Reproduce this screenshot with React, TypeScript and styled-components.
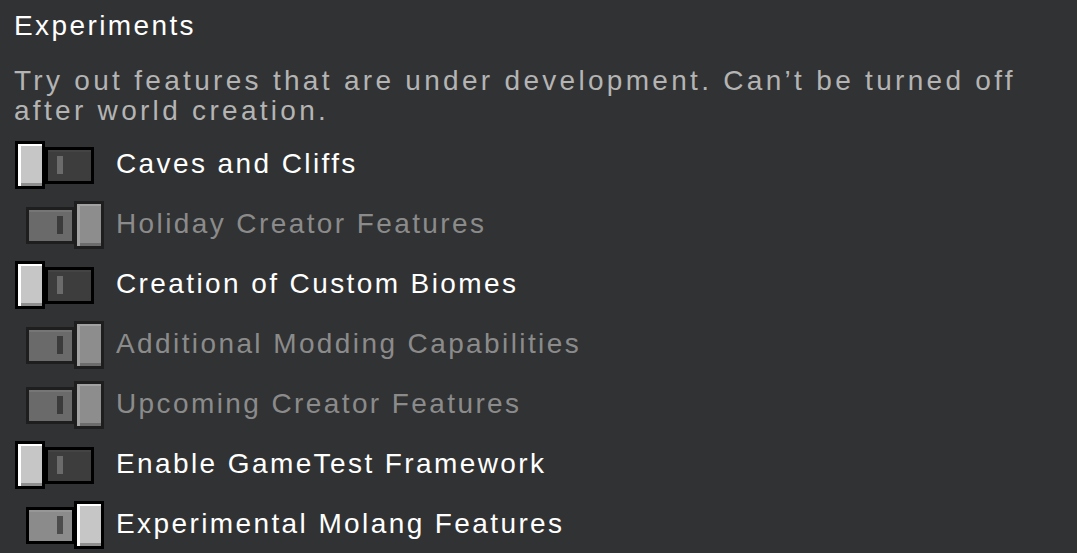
import React from "react";
import styled, { createGlobalStyle, css } from "styled-components";

const GlobalStyle = createGlobalStyle`
  html, body {
    margin: 0;
    padding: 0;
    background: #313233;
    overflow: hidden;
  }
`;

interface Experiment {
  label: string;
  on: boolean;
  disabled?: boolean;
}

const experiments: Experiment[] = [
  { label: "Caves and Cliffs", on: false },
  { label: "Holiday Creator Features", on: true, disabled: true },
  { label: "Creation of Custom Biomes", on: false },
  { label: "Additional Modding Capabilities", on: true, disabled: true },
  { label: "Upcoming Creator Features", on: true, disabled: true },
  { label: "Enable GameTest Framework", on: false },
  { label: "Experimental Molang Features", on: true },
];

const Toggle = ({ on, disabled }: { on: boolean; disabled?: boolean }) => (
  <ToggleBox $on={on}>
    <Track $on={on} $disabled={disabled}>
      <Marker $on={on} $disabled={disabled} />
    </Track>
    <Knob $disabled={disabled} />
  </ToggleBox>
);

const App = () => {
  return (
    <>
      <GlobalStyle />
      <Page>
        <Title>Experiments</Title>
        <Description>
          Try out features that are under development. Can’t be turned off after world creation.
        </Description>
        <List>
          {experiments.map((e) => (
            <Row key={e.label}>
              <Toggle on={e.on} disabled={e.disabled} />
              <Label $disabled={e.disabled}>{e.label}</Label>
            </Row>
          ))}
        </List>
      </Page>
    </>
  );
};

const textBase = css`
  font-family: "Liberation Sans", Arial, sans-serif;
  font-size: 28px;
  line-height: 30px;
  letter-spacing: 2.4px;
`;

const Page = styled("div")`
  width: 1077px;
  height: 553px;
  box-sizing: border-box;
  padding: 11px 0 0 14px;
  display: flex;
  flex-direction: column;
  overflow: hidden;
`;

const Title = styled("div")`
  ${textBase};
  color: #ffffff;
`;

const Description = styled("div")`
  ${textBase};
  letter-spacing: 3.3px;
  color: #b4b4b4;
  margin-top: 25px;
  width: 1040px;
`;

const List = styled("div")`
  display: flex;
  flex-direction: column;
  margin-top: 9px;
`;

const Row = styled("div")`
  display: flex;
  align-items: center;
  height: 60px;
`;

const Label = styled("div")<{ $disabled?: boolean }>`
  ${textBase};
  color: ${(p) => (p.$disabled ? "#8b8b8b" : "#ffffff")};
  margin-left: 12px;
  padding-bottom: 3px;
  white-space: nowrap;
`;

const ToggleBox = styled("div")<{ $on: boolean }>`
  width: 89px;
  margin-left: 1px;
  height: 48px;
  display: flex;
  align-items: center;
  flex-direction: ${(p) => (p.$on ? "row" : "row-reverse")};
  justify-content: flex-end;
`;

const Track = styled("div")<{ $on: boolean; $disabled?: boolean }>`
  box-sizing: border-box;
  width: 49px;
  height: 37px;
  border: 3px solid ${(p) => (p.$disabled ? "#1e1e1f" : "#000000")};
  background: ${(p) => (p.$disabled ? "#6a6a6a" : p.$on ? "#8b8b8b" : "#3d3d3e")};
  box-shadow: inset 0 2px 0 ${(p) => (p.$disabled ? "#767676" : p.$on ? "#979797" : "#444445")};
  display: flex;
  align-items: center;
  justify-content: ${(p) => (p.$on ? "flex-end" : "flex-start")};
  padding: 0 9px;
  margin: ${(p) => (p.$on ? "0 -1px 0 0" : "0")};
`;

const Marker = styled("div")<{ $on: boolean; $disabled?: boolean }>`
  width: 6px;
  height: 18px;
  background: ${(p) => (p.$disabled ? "#3b3b3b" : p.$on ? "#4c4c4c" : "#6b6b6b")};
`;

const Knob = styled("div")<{ $disabled?: boolean }>`
  box-sizing: border-box;
  width: 30px;
  height: 48px;
  border: 3px solid ${(p) => (p.$disabled ? "#1e1e1f" : "#000000")};
  background: ${(p) => (p.$disabled ? "#8d8d8d" : "#c6c6c6")};
  box-shadow:
    inset 3px 2px 0 ${(p) => (p.$disabled ? "#a2a2a2" : "#ffffff")},
    inset 0 -3px 0 ${(p) => (p.$disabled ? "#6c6c6c" : "#8e8e8e")};
`;

export default App;
